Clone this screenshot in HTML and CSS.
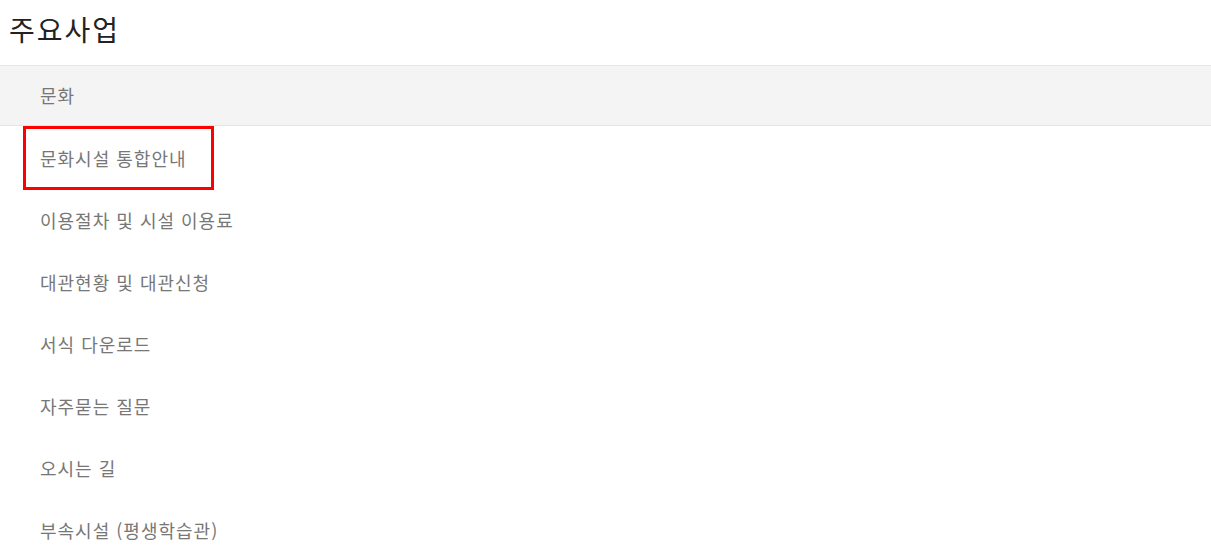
FILE: index.html
```html
<!DOCTYPE html>
<html lang="ko">
<head>
    <meta charset="UTF-8">
    <meta name="viewport" content="width=device-width, initial-scale=1.0">
    <title>주요사업</title>
    <link rel="stylesheet" href="styles.css">
</head>
<body>
    <div class="page-head">
        <h1>주요사업</h1>
    </div>
    <div class="category">문화</div>
    <ul class="sub-menu">
        <li><a href="#" class="active">문화시설 통합안내</a></li>
        <li><a href="#">이용절차 및 시설 이용료</a></li>
        <li><a href="#">대관현황 및 대관신청</a></li>
        <li><a href="#">서식 다운로드</a></li>
        <li><a href="#">자주묻는 질문</a></li>
        <li><a href="#">오시는 길</a></li>
        <li><a href="#">부속시설 (평생학습관)</a></li>
    </ul>
</body>
</html>
```
FILE: styles.css
```css
body {
    margin: 0;
    font-family: "Noto Sans CJK KR", "Noto Sans", sans-serif;
    background-color: white;
}
.page-head {
    height: 65px;
    padding-left: 9px;
    box-sizing: border-box;
}
.page-head h1 {
    margin: 0;
    font-size: 28px;
    font-weight: 400;
    letter-spacing: 2px;
    line-height: 58px;
    color: #222;
}
.category {
    height: 61px;
    line-height: 59px;
    padding-left: 40px;
    background-color: #f4f4f4;
    border-top: 1px solid #e6e6e6;
    border-bottom: 1px solid #e6e6e6;
    box-sizing: border-box;
    font-size: 18px;
    letter-spacing: 1px;
    color: #777;
}
.sub-menu {
    list-style: none;
    margin: 0;
    padding: 0 0 0 23px;
}
.sub-menu li {
    height: 62px;
}
.sub-menu a {
    display: inline-block;
    height: 64px;
    line-height: 58px;
    padding: 0 24px 0 14px;
    border: 3px solid transparent;
    box-sizing: border-box;
    font-size: 18px;
    letter-spacing: 1px;
    color: #777;
    text-decoration: none;
}
.sub-menu a.active {
    border-color: #f00;
}
```
